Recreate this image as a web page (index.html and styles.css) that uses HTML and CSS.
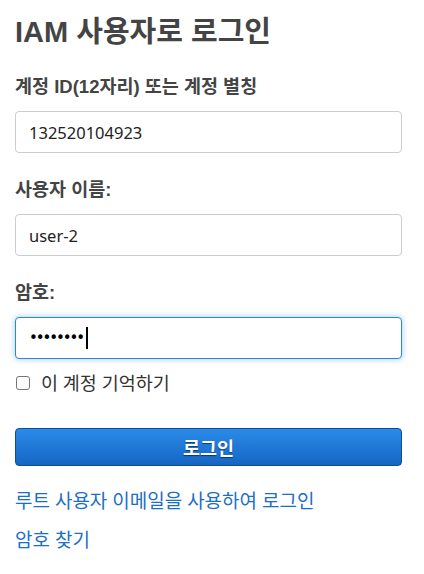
FILE: index.html
```html
<!DOCTYPE html>
<html lang="ko">
<head>
<meta charset="utf-8">
<title>IAM 사용자로 로그인</title>
<link rel="stylesheet" href="styles.css">
</head>
<body>
<main class="page">
  <h1 class="title">IAM 사용자로 로그인</h1>
  <form class="form">
    <label class="label" for="acct">계정 ID(12자리) 또는 계정 별칭</label>
    <input class="field" id="acct" type="text" value="132520104923">
    <label class="label" for="user">사용자 이름:</label>
    <input class="field" id="user" type="text" value="user-2">
    <label class="label" for="pw">암호:</label>
    <div class="field field-focus"><span class="dots">••••••••</span><span class="caret"></span></div>
    <label class="remember"><span class="box"></span><span>이 계정 기억하기</span></label>
    <button class="submit" type="button">로그인</button>
  </form>
  <a class="link link-first" href="#">루트 사용자 이메일을 사용하여 로그인</a>
  <a class="link" href="#">암호 찾기</a>
</main>
</body>
</html>
```
FILE: styles.css
```css
html, body {
  margin: 0;
  padding: 0;
  background: #fff;
}
body {
  font-family: "Noto Sans", "Noto Sans CJK KR", sans-serif;
  color: #444;
}
.page {
  padding: 0 22px 0 15px;
  display: flex;
  flex-direction: column;
}
.title {
  margin: 13px 0 0 0;
  font-family: "Liberation Sans", "Noto Sans CJK KR", sans-serif;
  font-size: 29px;
  line-height: 38px;
  font-weight: 700;
  color: #444;
}
.form {
  display: flex;
  flex-direction: column;
}
.label {
  font-family: "Liberation Sans", "Noto Sans CJK KR", sans-serif;
  font-size: 18.5px;
  font-weight: 700;
  line-height: 24px;
  color: #444;
  margin: 25px 0 12px 0;
}
.label:first-child {
  margin-top: 24px;
}
.field {
  box-sizing: border-box;
  height: 42px;
  width: 100%;
  border: 1px solid #ccc;
  border-radius: 4px;
  padding: 0 13px;
  font-family: "Noto Sans", "Noto Sans CJK KR", sans-serif;
  font-size: 16.5px;
  color: #222;
  background: #fff;
  outline: none;
  margin: 0;
}
.field-focus {
  display: flex;
  align-items: center;
  border-color: #2a87e0;
  box-shadow: 0 0 6px rgba(42, 135, 224, 0.45);
}
.dots {
  font-family: "DejaVu Sans", sans-serif;
  font-size: 15px;
  letter-spacing: -2.1px;
  color: #000;
}
.caret {
  display: inline-block;
  width: 2px;
  height: 22px;
  background: #000;
  margin-left: 3px;
}
.remember {
  display: flex;
  align-items: center;
  gap: 11px;
  margin-top: 12px;
  font-size: 18.5px;
  line-height: 24px;
  color: #333;
}
.box {
  box-sizing: border-box;
  width: 14px;
  height: 14px;
  border: 1px solid #767676;
  border-radius: 3px;
  margin-left: 1px;
}
.submit {
  margin-top: 33px;
  height: 38px;
  width: 100%;
  border: 1px solid #0b4f95;
  border-radius: 4px;
  background: linear-gradient(#2b8ae8, #1566c4);
  color: #fff;
  font-family: "Noto Sans CJK KR", sans-serif;
  font-size: 18.5px;
  font-weight: 700;
  text-shadow: 0 1px 1px rgba(0, 0, 0, 0.5);
  padding: 0;
}
.link {
  font-size: 19px;
  line-height: 24px;
  color: #1b6fc4;
  text-decoration: none;
  align-self: flex-start;
}
.link-first {
  margin-top: 23px;
}
.link + .link {
  margin-top: 15px;
}
```
